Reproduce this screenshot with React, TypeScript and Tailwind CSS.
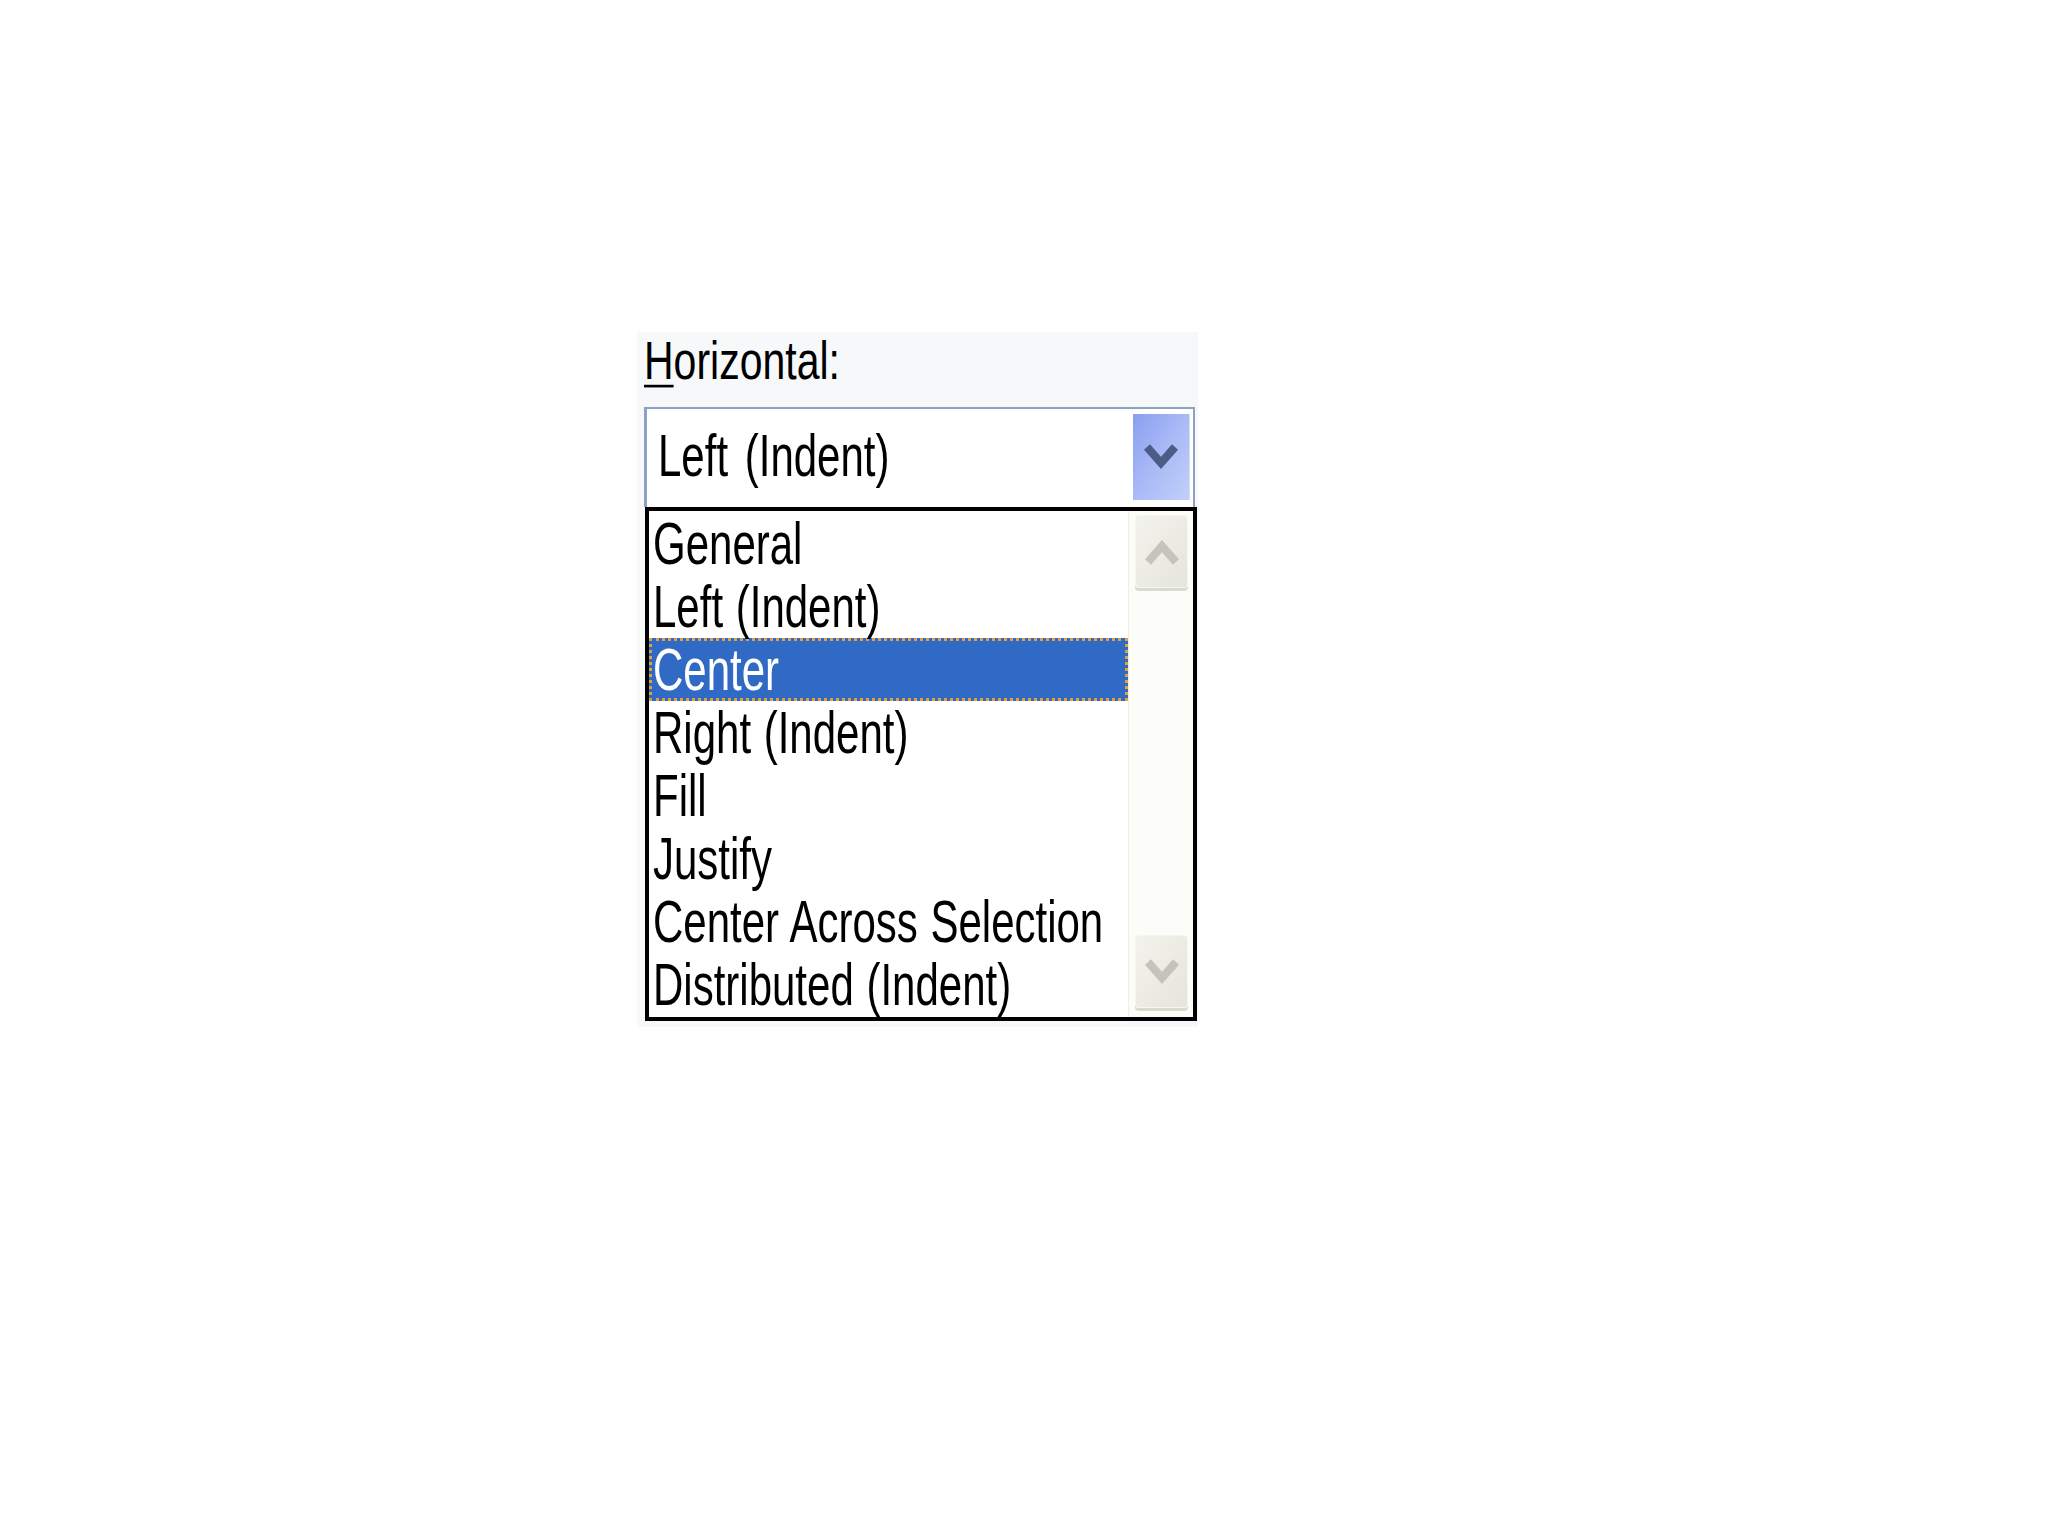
const OPTIONS = [
  'General',
  'Left (Indent)',
  'Center',
  'Right (Indent)',
  'Fill',
  'Justify',
  'Center Across Selection',
  'Distributed (Indent)',
]

const SELECTED = 'Center'

function Chevron({ up, color, className }: { up?: boolean; color: string; className: string }) {
  return (
    <svg viewBox="0 0 36 30" className={className} fill="none">
      <polyline
        points={up ? '4,25 18,9 32,25' : '4,5 18,21 32,5'}
        stroke={color}
        strokeWidth="8"
        strokeLinejoin="miter"
      />
    </svg>
  )
}

function ScrollButton({ up }: { up?: boolean }) {
  return (
    <div className="w-[53px] h-[73px] rounded-[4px] bg-gradient-to-br from-[#f3f2ec] to-[#e6e5dc] border border-[#f6f6f0] shadow-[0_3px_0_#d9dccb] flex items-center justify-center">
      <Chevron up={up} color="#c4c4bc" className="w-[36px] h-[30px]" />
    </div>
  )
}

export default function App() {
  return (
    <div className="min-h-screen bg-white pt-[332px] pl-[637px] font-['Liberation_Sans',Arial,sans-serif] text-black">
      <div className="w-[561px] h-[695px] bg-[#f7f8fa]">
        {/* Label */}
        <div className="h-[59px] flex items-center pl-[7px]">
          <span className="inline-block text-[41px] leading-none scale-y-[1.33]">
            <span className="underline decoration-[2px] underline-offset-[4px]">H</span>orizontal:
          </span>
        </div>

        {/* Combo box */}
        <div className="mt-[16px] ml-[7px] w-[551px] h-[100px] bg-white border-t-2 border-l-[3px] border-r-2 border-[#8ba2c2] flex">
          <div className="flex-1 flex items-center pl-[11px] pb-[4px]">
            <span className="inline-block text-[42px] leading-none scale-y-[1.4] [word-spacing:5px]">Left (Indent)</span>
          </div>
          <div className="pt-[5px] pr-[3px]">
            <div className="w-[57px] h-[86px] bg-gradient-to-br from-[#8a9ef0] via-[#a9baf6] to-[#c2cff9] border-r border-[#d4dcf8] flex items-center justify-center">
              <Chevron color="#4b5d85" className="w-[36px] h-[30px]" />
            </div>
          </div>
        </div>

        {/* Drop-down list */}
        <div className="ml-[8px] w-[552px] h-[514px] bg-white border-4 border-black flex">
          <div className="flex-1 pt-[1px]">
            {OPTIONS.map(o => (
              <div
                key={o}
                className={`h-[63px] flex items-center pl-[1px] border-[3px] ${
                  o === SELECTED
                    ? 'bg-[#316ac5] text-white border-dotted border-[#dfa23e]'
                    : 'border-transparent'
                }`}
              >
                <span className="inline-block text-[42px] leading-none scale-y-[1.4] whitespace-nowrap [word-spacing:1px]">{o}</span>
              </div>
            ))}
          </div>
          <div className="w-[65px] bg-[#fcfcf8] border-l border-[#eeeee6] flex flex-col justify-between pt-[4px] pb-[9px] pl-[6px]">
            <ScrollButton up />
            <ScrollButton />
          </div>
        </div>
      </div>
    </div>
  )
}
